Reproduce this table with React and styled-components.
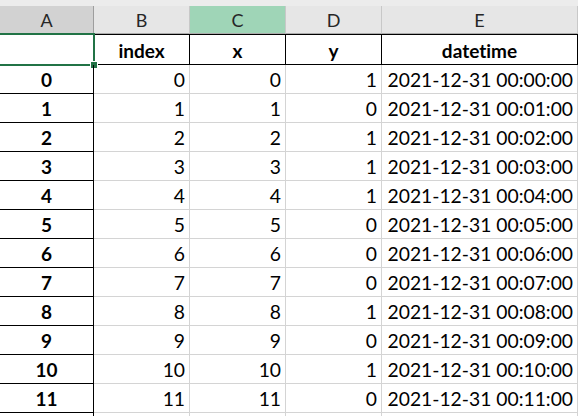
import React from "react";
import styled, { createGlobalStyle } from "styled-components";

const GlobalStyle = createGlobalStyle`
  html, body {
    margin: 0;
    padding: 0;
    background: #ffffff;
    overflow: hidden;
  }
  body {
    font-family: Lato, "Open Sans", "Liberation Sans", sans-serif;
    font-variant-ligatures: none;
    font-feature-settings: "liga" 0, "clig" 0;
  }
`;

const COLS = "94px 96px 96px 96px 196px";

const Sheet = styled.div`
  width: 578px;
  height: 416px;
  overflow: hidden;
  background: #fff;
`;

const TopStrip = styled.div`
  height: 6px;
  background: #ececec;
`;

const HeaderBar = styled.div`
  display: grid;
  grid-template-columns: ${COLS};
  height: 28px;
`;

const ColHead = styled.div`
  box-sizing: border-box;
  display: flex;
  align-items: center;
  justify-content: center;
  font-size: 18px;
  color: #262626;
  background: ${(p) => (p.$active ? "#d2d2d2" : p.$green ? "#9fd5b7" : "#e6e6e6")};
  border-right: 1px solid ${(p) => (p.$active ? "#9e9e9e" : "#c8c8c8")};
  border-bottom: 1px solid #ababab;
  padding-top: 1px;
`;

const Row = styled.div`
  display: grid;
  grid-template-columns: ${COLS};
  height: ${(p) => (p.$head ? "31px" : "29px")};
`;

const IndexCell = styled.div`
  position: relative;
  box-sizing: border-box;
  display: flex;
  align-items: center;
  justify-content: center;
  font-size: 19px;
  font-weight: 700;
  color: #000;
  border-right: 1px solid #000;
  border-bottom: 1px solid #000;
  border-top: ${(p) => (p.$head ? "1px solid transparent" : "none")};
  padding-top: 1px;
`;

const HeadCell = styled.div`
  box-sizing: border-box;
  display: flex;
  align-items: center;
  justify-content: center;
  font-size: 19px;
  font-weight: 700;
  color: #000;
  border-top: 1px solid #000;
  border-right: 1px solid #000;
  border-bottom: 1px solid #000;
  padding-top: 1px;
`;

const DataCell = styled.div`
  box-sizing: border-box;
  display: flex;
  align-items: center;
  justify-content: flex-end;
  padding: 1px 4px 0 0;
  font-size: 19.3px;
  color: #000;
  white-space: nowrap;
  border-right: 1px solid #d4d4d4;
  border-bottom: 1px solid #d4d4d4;
`;

const Selection = styled.div`
  position: absolute;
  left: -2px;
  top: -2px;
  right: -2px;
  bottom: -2px;
  border: 2px solid #217346;
  pointer-events: none;
`;

const FillHandle = styled.div`
  position: absolute;
  right: -5px;
  bottom: -5px;
  width: 6px;
  height: 6px;
  background: #217346;
  border: 1px solid #fff;
`;

const rows = [1, 0, 1, 1, 1, 0, 0, 0, 1, 0, 1, 0].map((y, i) => ({ i, y }));

const pad = (n) => String(n).padStart(2, "0");

export default function App() {
  return (
    <Sheet>
      <GlobalStyle />
      <TopStrip />
      <HeaderBar>
        <ColHead $active>A</ColHead>
        <ColHead>B</ColHead>
        <ColHead $green>C</ColHead>
        <ColHead>D</ColHead>
        <ColHead>E</ColHead>
      </HeaderBar>
      <Row $head>
        <IndexCell $head>
          <Selection>
            <FillHandle />
          </Selection>
        </IndexCell>
        <HeadCell>index</HeadCell>
        <HeadCell>x</HeadCell>
        <HeadCell>y</HeadCell>
        <HeadCell>datetime</HeadCell>
      </Row>
      {rows.map((r) => (
        <Row key={r.i}>
          <IndexCell>{r.i}</IndexCell>
          <DataCell>{r.i}</DataCell>
          <DataCell>{r.i}</DataCell>
          <DataCell>{r.y}</DataCell>
          <DataCell>{`2021-12-31 00:${pad(r.i)}:00`}</DataCell>
        </Row>
      ))}
      <Row>
        <IndexCell />
        <DataCell />
        <DataCell />
        <DataCell />
        <DataCell />
      </Row>
    </Sheet>
  );
}
